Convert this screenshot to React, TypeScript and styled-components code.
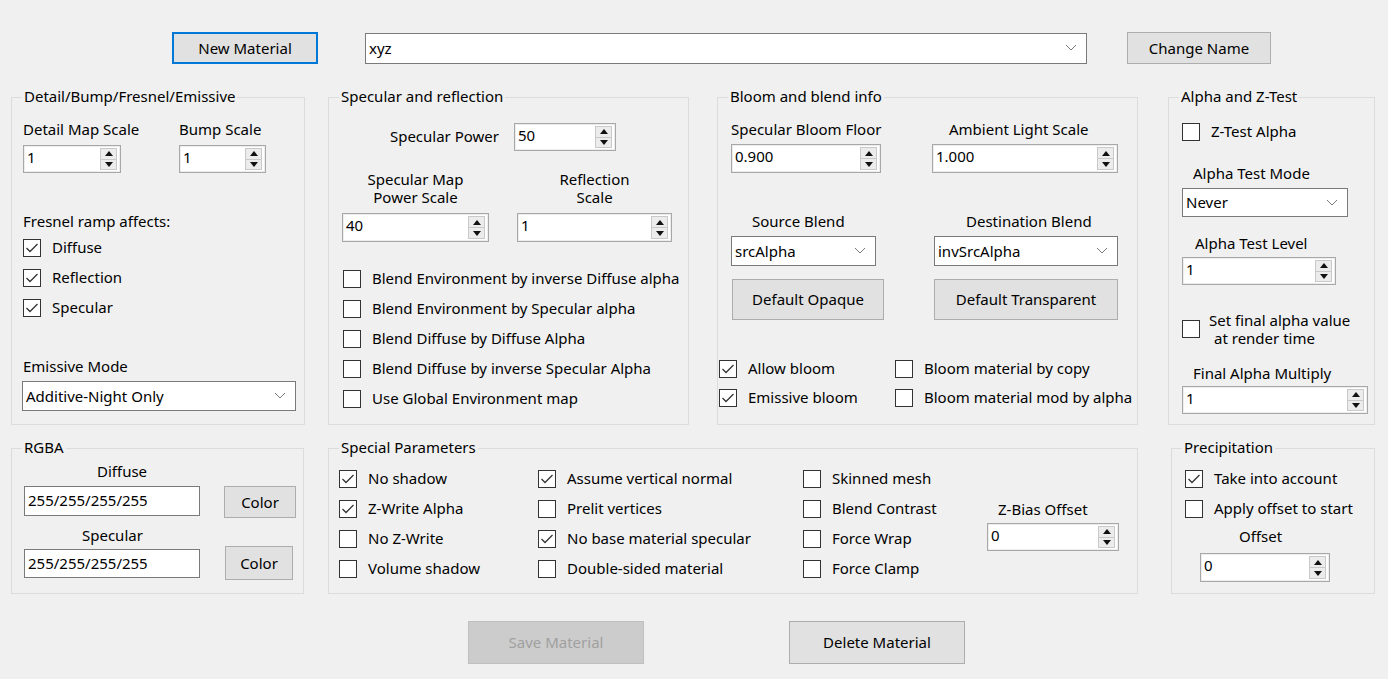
import React from 'react'
import styled, { createGlobalStyle } from 'styled-components'

const GlobalStyle = createGlobalStyle`
  html, body {
    margin: 0;
    padding: 0;
    background: #f0f0f0;
  }
  body {
    font-family: "Noto Sans", "Liberation Sans", Arial, sans-serif;
    font-size: 15px;
    color: #000;
  }
  * { box-sizing: border-box; }
`

const Window = styled.div`
  width: 1388px;
  height: 679px;
  padding-left: 11px;
  background: #f0f0f0;
  overflow: hidden;
`

const TopBar = styled.div`
  display: flex;
  align-items: center;
  padding-top: 32px;
  height: 64px;
`

const Row = styled.div<{ $mt: number; $h: number }>`
  display: flex;
  align-items: stretch;
  margin-top: ${p => p.$mt}px;
  height: ${p => p.$h}px;
`

const Group = styled.fieldset<{ $w: number; $ml?: number }>`
  width: ${p => p.$w}px;
  margin: 0 0 0 ${p => p.$ml ?? 0}px;
  padding: 0;
  border: 1px solid #dcdcdc;
  min-inline-size: 0;
`

const Legend = styled.legend`
  margin-left: 10px;
  padding: 0 2px;
  line-height: 17px;
  height: 18px;
`

const Body = styled.div<{ $pt: number; $pl: number }>`
  display: flex;
  flex-direction: column;
  align-items: flex-start;
  padding: ${p => p.$pt}px 0 0 ${p => p.$pl}px;
`

const Label = styled.div<{ $mt?: number; $indent?: number; $align?: string }>`
  line-height: 17px;
  height: 18px;
  white-space: nowrap;
  margin-top: ${p => p.$mt ?? 0}px;
  padding-left: ${p => p.$indent ?? 0}px;
  text-align: ${p => p.$align ?? 'left'};
`

const TwoLine = styled.div`
  line-height: 18px;
  text-align: center;
  margin-top: -1px;
  margin-bottom: 1px;
`

const FieldCol = styled.div<{ $gap: number }>`
  display: flex;
  flex-direction: column;
  gap: ${p => p.$gap}px;
`

const Fields = styled.div<{ $cols: string; $gap: number; $mt?: number; $ml?: number }>`
  display: grid;
  grid-template-columns: ${p => p.$cols};
  column-gap: ${p => p.$gap}px;
  align-items: start;
  margin-top: ${p => p.$mt ?? 0}px;
  margin-left: ${p => p.$ml ?? 0}px;
`

/* numeric up/down */
const SpinBox = styled.div<{ $w: number; $h?: number; $mt?: number; $ml?: number }>`
  display: flex;
  align-items: stretch;
  width: ${p => p.$w}px;
  height: ${p => p.$h ?? 28}px;
  margin-top: ${p => p.$mt ?? 0}px;
  margin-left: ${p => p.$ml ?? 0}px;
  background: #fff;
  border: 1px solid #a8a8a8;
  box-shadow: inset 0 0 0 1px #ededed;
`

const SpinText = styled.div`
  flex: 1;
  padding: 2px 0 0 3px;
  line-height: 18px;
`

const SpinButtons = styled.div`
  display: flex;
  flex-direction: column;
  width: 17px;
  margin: 2px 3px 2px 0;
  border: 1px solid #c9c9c9;
  background: #ececec;
`

const SpinHalf = styled.div<{ $down?: boolean }>`
  flex: 1;
  display: flex;
  align-items: center;
  justify-content: center;
  border-top: ${p => (p.$down ? '1px solid #c9c9c9' : 'none')};
  &::after {
    content: '';
    border-left: 4px solid transparent;
    border-right: 4px solid transparent;
    ${p => (p.$down ? 'border-top: 5px solid #111;' : 'border-bottom: 5px solid #111;')}
  }
`

const Spin = ({ value, w, h, mt, ml }: { value: string; w: number; h?: number; mt?: number; ml?: number }) => (
  <SpinBox $w={w} $h={h} $mt={mt} $ml={ml}>
    <SpinText>{value}</SpinText>
    <SpinButtons>
      <SpinHalf />
      <SpinHalf $down />
    </SpinButtons>
  </SpinBox>
)

/* combo box */
const ComboBox = styled.div<{ $w: number; $h?: number; $mt?: number; $ml?: number }>`
  display: flex;
  align-items: center;
  justify-content: space-between;
  width: ${p => p.$w}px;
  height: ${p => p.$h ?? 30}px;
  margin-top: ${p => p.$mt ?? 0}px;
  margin-left: ${p => p.$ml ?? 0}px;
  padding: 0 9px 1px 3px;
  background: #fff;
  border: 1px solid #7a7a7a;
  white-space: nowrap;
`

const Chevron = () => (
  <svg width="12" height="7" viewBox="0 0 12 7">
    <path d="M1 1 L6 6 L11 1" fill="none" stroke="#7a7a7a" strokeWidth="1" />
  </svg>
)

const Combo = ({ value, w, h, mt, ml }: { value: string; w: number; h?: number; mt?: number; ml?: number }) => (
  <ComboBox $w={w} $h={h} $mt={mt} $ml={ml}>
    <span>{value}</span>
    <Chevron />
  </ComboBox>
)

/* push buttons */
const Button = styled.div<{ $w: number; $h: number; $mt?: number; $ml?: number; $focus?: boolean; $disabled?: boolean }>`
  display: flex;
  align-items: center;
  justify-content: center;
  flex-shrink: 0;
  width: ${p => p.$w}px;
  height: ${p => p.$h}px;
  margin-top: ${p => p.$mt ?? 0}px;
  margin-left: ${p => p.$ml ?? 0}px;
  padding-bottom: 1px;
  background: ${p => (p.$disabled ? '#cccccc' : '#e1e1e1')};
  color: ${p => (p.$disabled ? '#a0a0a0' : '#000')};
  border: ${p => (p.$focus ? '2px solid #0078d7' : p.$disabled ? '1px solid #bfbfbf' : '1px solid #adadad')};
  white-space: nowrap;
`

const TextBox = styled.div<{ $w: number; $h: number; $mt?: number }>`
  width: ${p => p.$w}px;
  height: ${p => p.$h}px;
  margin-top: ${p => p.$mt ?? 0}px;
  padding: 4px 0 0 3px;
  line-height: 18px;
  background: #fff;
  border: 1px solid #7a7a7a;
`

/* check boxes */
const CheckRow = styled.div<{ $h?: number }>`
  display: flex;
  align-items: center;
  gap: 11px;
  height: ${p => p.$h ?? 30}px;
  white-space: nowrap;
`

const Box = styled.span`
  display: inline-flex;
  width: 18px;
  height: 18px;
  flex-shrink: 0;
  background: #fff;
  border: 1px solid #333;
`

const CheckText = styled.span`
  line-height: 17px;
  padding-bottom: 1px;
`

const Check = ({ label, on, h }: { label: React.ReactNode; on?: boolean; h?: number }) => (
  <CheckRow $h={h}>
    <Box>
      {on && (
        <svg width="16" height="16" viewBox="0 0 16 16">
          <path d="M2.5 8 L6 11.5 L13.5 4" fill="none" stroke="#333" strokeWidth="1.3" />
        </svg>
      )}
    </Box>
    <CheckText>{label}</CheckText>
  </CheckRow>
)

const Stack = styled.div<{ $mt?: number; $ml?: number; $w?: number }>`
  display: flex;
  flex-direction: column;
  width: ${p => (p.$w ? `${p.$w}px` : 'auto')};
  margin-top: ${p => p.$mt ?? 0}px;
  margin-left: ${p => p.$ml ?? 0}px;
`

const InlineRow = styled.div<{ $gap: number; $mt?: number; $align?: string }>`
  display: flex;
  align-items: ${p => p.$align ?? 'center'};
  gap: ${p => p.$gap}px;
  margin-top: ${p => p.$mt ?? 0}px;
`

const CheckGrid = styled.div<{ $cols: string; $mt?: number; $ml?: number }>`
  display: grid;
  grid-template-columns: ${p => p.$cols};
  margin-top: ${p => p.$mt ?? 0}px;
  margin-left: ${p => p.$ml ?? 0}px;
`

const PowerLabel = styled(Label)`
  width: 156px;
`

const SubLine = styled.span<{ $indent?: number }>`
  display: block;
  line-height: 18px;
  padding-left: ${p => p.$indent ?? 0}px;
`

const Footer = styled.div`
  display: flex;
  margin-top: 27px;
`

export default function App() {
  return (
    <>
      <GlobalStyle />
      <Window>
        <TopBar>
          <Button $w={146} $h={32} $ml={161} $focus>New Material</Button>
          <Combo value="xyz" w={722} h={31} ml={47} />
          <Button $w={144} $h={32} $ml={40}>Change Name</Button>
        </TopBar>

        <Row $mt={24} $h={337}>
          <Group $w={294}>
            <Legend>Detail/Bump/Fresnel/Emissive</Legend>
            <Body $pt={15} $pl={11}>
              <Fields $cols="156px auto" $gap={0}>
                <FieldCol $gap={6}>
                  <Label>Detail Map Scale</Label>
                  <Spin value="1" w={98} />
                </FieldCol>
                <FieldCol $gap={6}>
                  <Label>Bump Scale</Label>
                  <Spin value="1" w={87} />
                </FieldCol>
              </Fields>
              <Label $mt={40}>Fresnel ramp affects:</Label>
              <Stack $mt={2}>
                <Check label="Diffuse" on />
                <Check label="Reflection" on />
                <Check label="Specular" on />
              </Stack>
              <Label $mt={35}>Emissive Mode</Label>
              <Combo value="Additive-Night Only" w={274} mt={5} ml={-1} />
            </Body>
          </Group>

          <Group $w={361} $ml={23}>
            <Legend>Specular and reflection</Legend>
            <Body $pt={17} $pl={14}>
              <InlineRow $gap={15}>
                <PowerLabel $align="right">Specular Power</PowerLabel>
                <Spin value="50" w={102} />
              </InlineRow>
              <Fields $cols="147px 155px" $gap={28} $mt={20} $ml={-1}>
                <FieldCol $gap={6}>
                  <TwoLine>Specular Map<br />Power Scale</TwoLine>
                  <Spin value="40" w={147} h={29} />
                </FieldCol>
                <FieldCol $gap={6}>
                  <TwoLine>Reflection<br />Scale</TwoLine>
                  <Spin value="1" w={155} h={29} />
                </FieldCol>
              </Fields>
              <Stack $mt={22}>
                <Check label="Blend Environment by inverse Diffuse alpha" />
                <Check label="Blend Environment by Specular alpha" />
                <Check label="Blend Diffuse by Diffuse Alpha" />
                <Check label="Blend Diffuse by inverse Specular Alpha" />
                <Check label="Use Global Environment map" />
              </Stack>
            </Body>
          </Group>

          <Group $w={421} $ml={28}>
            <Legend>Bloom and blend info</Legend>
            <Body $pt={15} $pl={13}>
              <Fields $cols="152px 186px" $gap={50}>
                <FieldCol $gap={5}>
                  <Label>Specular Bloom Floor</Label>
                  <Spin value="0.900" w={150} h={29} />
                </FieldCol>
                <FieldCol $gap={5}>
                  <Label $indent={16}>Ambient Light Scale</Label>
                  <Spin value="1.000" w={186} h={29} ml={-1} />
                </FieldCol>
              </Fields>
              <Fields $cols="152px 186px" $gap={50} $mt={40}>
                <FieldCol $gap={5}>
                  <Label $indent={21}>Source Blend</Label>
                  <Combo value="srcAlpha" w={145} />
                </FieldCol>
                <FieldCol $gap={5}>
                  <Label $indent={33}>Destination Blend</Label>
                  <Combo value="invSrcAlpha" w={184} ml={1} />
                </FieldCol>
              </Fields>
              <Fields $cols="152px 186px" $gap={50} $mt={13}>
                <Button $w={152} $h={41} $ml={1}>Default Opaque</Button>
                <Button $w={184} $h={41} $ml={1}>Default Transparent</Button>
              </Fields>
              <CheckGrid $cols="176px auto" $mt={34} $ml={-12}>
                <Check label="Allow bloom" on h={29} />
                <Check label="Bloom material by copy" h={29} />
                <Check label="Emissive bloom" on h={29} />
                <Check label="Bloom material mod by alpha" h={29} />
              </CheckGrid>
            </Body>
          </Group>

          <Group $w={207} $ml={30}>
            <Legend>Alpha and Z-Test</Legend>
            <Body $pt={11} $pl={13}>
              <Check label="Z-Test Alpha" />
              <Label $mt={18} $indent={11}>Alpha Test Mode</Label>
              <Combo value="Never" w={166} h={29} mt={5} />
              <Label $mt={18} $indent={13}>Alpha Test Level</Label>
              <Spin value="1" w={154} mt={4} />
              <InlineRow $gap={9} $mt={26}>
                <Box />
                <div>
                  <SubLine>Set final alpha value</SubLine>
                  <SubLine $indent={5}>at render time</SubLine>
                </div>
              </InlineRow>
              <Label $mt={18} $indent={11}>Final Alpha Multiply</Label>
              <Spin value="1" w={186} mt={3} />
            </Body>
          </Group>
        </Row>

        <Row $mt={14} $h={155}>
          <Group $w={293}>
            <Legend>RGBA</Legend>
            <Body $pt={6} $pl={12}>
              <Label $indent={73}>Diffuse</Label>
              <InlineRow $gap={24} $mt={5} $align="flex-start">
                <TextBox $w={176} $h={30}>255/255/255/255</TextBox>
                <Button $w={72} $h={32}>Color</Button>
              </InlineRow>
              <Label $mt={9} $indent={58}>Specular</Label>
              <InlineRow $gap={25} $mt={1} $align="flex-start">
                <TextBox $w={176} $h={29} $mt={3}>255/255/255/255</TextBox>
                <Button $w={68} $h={34}>Color</Button>
              </InlineRow>
            </Body>
          </Group>

          <Group $w={810} $ml={24}>
            <Legend>Special Parameters</Legend>
            <Body $pt={7} $pl={10}>
              <InlineRow $gap={0} $align="flex-start">
                <Stack $w={199}>
                  <Check label="No shadow" on />
                  <Check label="Z-Write Alpha" on />
                  <Check label="No Z-Write" />
                  <Check label="Volume shadow" />
                </Stack>
                <Stack $w={265}>
                  <Check label="Assume vertical normal" on />
                  <Check label="Prelit vertices" />
                  <Check label="No base material specular" on />
                  <Check label="Double-sided material" />
                </Stack>
                <Stack $w={184}>
                  <Check label="Skinned mesh" />
                  <Check label="Blend Contrast" />
                  <Check label="Force Wrap" />
                  <Check label="Force Clamp" />
                </Stack>
                <Stack $mt={37}>
                  <Label $indent={11}>Z-Bias Offset</Label>
                  <Spin value="0" w={132} mt={4} />
                </Stack>
              </InlineRow>
            </Body>
          </Group>

          <Group $w={204} $ml={33}>
            <Legend>Precipitation</Legend>
            <Body $pt={7} $pl={13}>
              <Check label="Take into account" on />
              <Check label="Apply offset to start" />
              <Label $mt={4} $indent={54}>Offset</Label>
              <Spin value="0" w={130} h={29} mt={7} ml={15} />
            </Body>
          </Group>
        </Row>

        <Footer>
          <Button $w={176} $h={43} $ml={457} $disabled>Save Material</Button>
          <Button $w={176} $h={43} $ml={145}>Delete Material</Button>
        </Footer>
      </Window>
    </>
  )
}
